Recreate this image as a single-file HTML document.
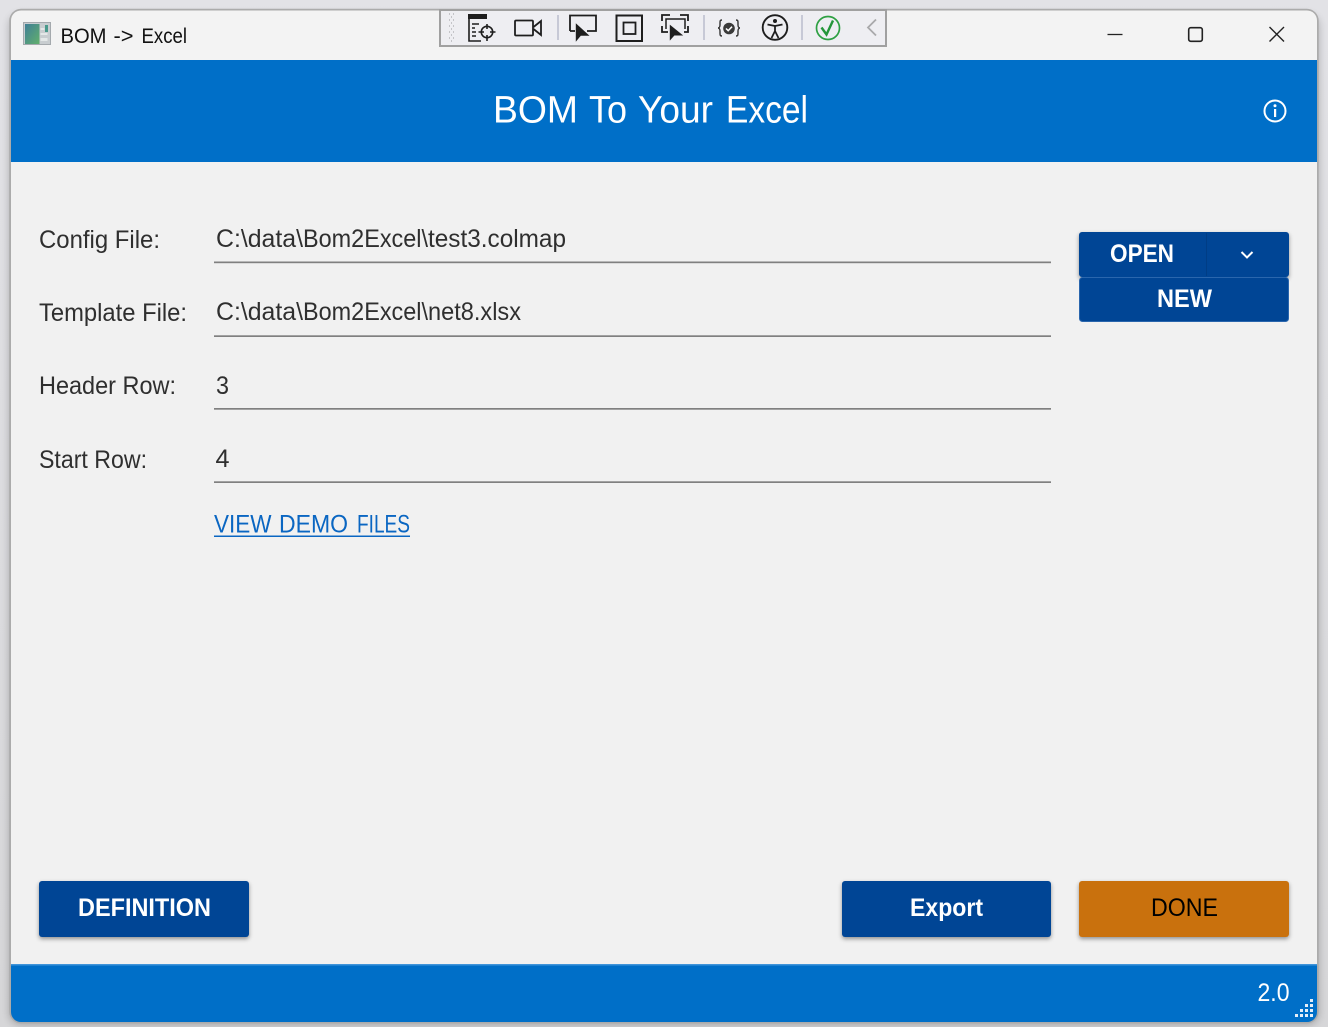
<!DOCTYPE html>
<html lang="en">
<head>
<meta charset="utf-8">
<title>BOM -> Excel</title>
<style>
html,body{margin:0;padding:0;width:1328px;height:1027px;overflow:hidden;background:#dcdce0}
svg{display:block}
text{font-family:"Liberation Sans",sans-serif}
</style>
</head>
<body>
<svg width="1328" height="1027" viewBox="0 0 1328 1027" xmlns="http://www.w3.org/2000/svg">
<defs>
<linearGradient id="bg" x1="0" y1="0" x2="0" y2="1"><stop offset="0" stop-color="#e2e2e6"/><stop offset="1" stop-color="#d6d6d8"/></linearGradient>
<linearGradient id="ic" x1="0" y1="0" x2="1" y2="1"><stop offset="0" stop-color="#3f7f96"/><stop offset="1" stop-color="#62b06c"/></linearGradient>
<filter id="sh" x="-10%" y="-20%" width="120%" height="150%"><feDropShadow dx="0" dy="2" stdDeviation="2.2" flood-color="#000" flood-opacity=".4"/></filter>
<filter id="ws" x="-3%" y="-3%" width="106%" height="106%"><feGaussianBlur stdDeviation="4"/></filter>
<clipPath id="win"><rect x="11" y="10.500" width="1306" height="1011.500" rx="10"/></clipPath>
</defs>
<rect width="1328" height="1027" fill="url(#bg)"/>
<rect x="9" y="14" width="1310" height="1011" rx="12" fill="#000" opacity=".22" filter="url(#ws)"/>
<rect x="9.200" y="8.700" width="1309.500" height="1014.800" rx="12" fill="#ababab"/>
<g clip-path="url(#win)">
<rect x="11" y="10" width="1306" height="50" fill="#f3f3f3"/>
<rect x="11" y="60" width="1306" height="102" fill="#006fc8"/>
<rect x="11" y="162" width="1306" height="803" fill="#f1f1f1"/>
<rect x="11" y="965" width="1306" height="57" fill="#006fc8"/>
<rect x="11" y="964" width="1306" height="1.500" fill="#3f94da"/>
</g>

<!-- title bar -->
<rect x="23.500" y="22.500" width="27" height="22" fill="#c8cdd0" stroke="#a4a9ad"/>
<rect x="25" y="24" width="14.500" height="20" fill="url(#ic)"/>
<rect x="45" y="25" width="3" height="7" fill="#4a9a8c"/>
<rect x="40.500" y="28" width="4" height="2" fill="#e4e8e8"/><rect x="40.500" y="33" width="7" height="2" fill="#e4e8e8"/><rect x="40.500" y="38" width="7" height="3" fill="#e4e8e8"/>
<g font-size="21" fill="#111">
<text x="60.500" y="43" textLength="46" lengthAdjust="spacingAndGlyphs">BOM</text>
<text x="113.500" y="43" textLength="20" lengthAdjust="spacingAndGlyphs">-&gt;</text>
<text x="141.500" y="43" textLength="45.500" lengthAdjust="spacingAndGlyphs">Excel</text>
</g>

<!-- window controls -->
<path d="M1107.500 34.500h15" stroke="#222" stroke-width="1.300" fill="none"/>
<rect x="1188.700" y="27.700" width="13.600" height="13.600" rx="2" fill="none" stroke="#222" stroke-width="1.600"/>
<path d="M1269.500 27l14.500 14.500M1284 27l-14.500 14.500" stroke="#222" stroke-width="1.400" fill="none"/>

<!-- debug toolbar -->
<rect x="440" y="10" width="446" height="36" fill="#eeeef2" stroke="#a0a0a0" stroke-width="2"/>
<path d="M449 14h1M453 14h1M451 17h1M449 20h1M453 20h1M451 23h1M449 26h1M453 26h1M451 29h1M449 32h1M453 32h1M451 35h1M449 38h1M453 38h1M451 41h1" stroke="#c4c4c8" stroke-width="2" fill="none"/>
<!-- icon 1 -->
<rect x="468" y="14" width="19" height="5" fill="#1e1e1e"/>
<path d="M469 19v22h12M472 24h7M472 28h3M472 32h4M472 36h4" stroke="#1e1e1e" stroke-width="1.600" fill="none"/>
<circle cx="487" cy="32" r="5.700" fill="#eeeef2" stroke="#1e1e1e" stroke-width="1.600"/>
<path d="M487 24v5M487 35v6M478.500 32h5.500M490 32h5.500" stroke="#1e1e1e" stroke-width="1.600" fill="none"/>
<!-- camera -->
<rect x="515" y="20.500" width="18" height="15" rx="1" fill="none" stroke="#1e1e1e" stroke-width="1.800"/>
<path d="M533.500 27l7.500-6v14l-7.500-6" fill="none" stroke="#1e1e1e" stroke-width="1.800"/>
<path d="M558 15v25M704 15v25M802 15v25" stroke="#c7c9d6" stroke-width="2" fill="none"/>
<!-- select element -->
<path d="M570 31V15.500h26V31h-9M570 31h5" fill="none" stroke="#1e1e1e" stroke-width="1.800"/>
<path d="M575.800 23.300V41.700L580.800 35.800H589.500Z" fill="#1e1e1e"/>
<!-- layout box -->
<rect x="616.500" y="15.500" width="25.500" height="25.500" fill="none" stroke="#1e1e1e" stroke-width="2"/>
<rect x="623.500" y="22.500" width="12" height="11.500" fill="none" stroke="#1e1e1e" stroke-width="1.800"/>
<!-- screen capture icon -->
<path d="M662 21v-6h8M680 15h8v6M662 26v6h6M688 26v6h-4" fill="none" stroke="#1e1e1e" stroke-width="1.800"/>
<path d="M666 29v-10h19v10" fill="none" stroke="#1e1e1e" stroke-width="1.500"/>
<path d="M669.500 24V41.500L674.500 35.800H684Z" fill="#1e1e1e" stroke="#eeeef2" stroke-width=".6"/>
<!-- braces check -->
<path d="M722 20c-2 0-2 1-2 3v2c0 2-1 3-2 3 1 0 2 1 2 3v2c0 2 0 3 2 3M736 20c2 0 2 1 2 3v2c0 2 1 3 2 3-1 0-2 1-2 3v2c0 2 0 3-2 3" fill="none" stroke="#333" stroke-width="1.400"/>
<circle cx="729" cy="28.500" r="5.800" fill="#3a3a3a"/>
<path d="M726 28.500l2.200 2.200 3.800-4" stroke="#fff" stroke-width="1.500" fill="none"/>
<!-- accessibility -->
<circle cx="775" cy="27.500" r="12.300" fill="none" stroke="#1e1e1e" stroke-width="1.900"/>
<circle cx="775" cy="21" r="2" fill="#1e1e1e"/>
<path d="M767.500 24.500l7.500 1.500 7.500-1.500M775 26v5M775 31l-3.500 7M775 31l3.500 7" fill="none" stroke="#1e1e1e" stroke-width="1.800"/>
<!-- green check -->
<circle cx="828" cy="28" r="11.500" fill="none" stroke="#2ea043" stroke-width="1.700"/>
<path d="M821.500 27.500l5 7 6.500-14" fill="none" stroke="#24963a" stroke-width="2.400"/>
<!-- chevron -->
<path d="M876 19.500l-8 8 8 8" fill="none" stroke="#a9a9ab" stroke-width="1.800"/>

<!-- header -->
<g font-size="38" fill="#fff">
<text x="493" y="122.500" textLength="85" lengthAdjust="spacingAndGlyphs">BOM</text>
<text x="589" y="122.500" textLength="38" lengthAdjust="spacingAndGlyphs">To</text>
<text x="638" y="122.500" textLength="75" lengthAdjust="spacingAndGlyphs">Your</text>
<text x="726" y="122.500" textLength="82" lengthAdjust="spacingAndGlyphs">Excel</text>
</g>
<circle cx="1275" cy="111" r="10.500" fill="none" stroke="#fff" stroke-width="2"/>
<circle cx="1275" cy="105.800" r="1.500" fill="#fff"/>
<rect x="1274" y="109" width="2.200" height="8" fill="#fff"/>

<!-- form -->
<g font-size="25" fill="#2f2f2f">
<text x="39" y="248" textLength="121" lengthAdjust="spacingAndGlyphs">Config File:</text>
<text x="39" y="321" textLength="148" lengthAdjust="spacingAndGlyphs">Template File:</text>
<text x="39" y="394" textLength="137" lengthAdjust="spacingAndGlyphs">Header Row:</text>
<text x="39" y="468" textLength="108" lengthAdjust="spacingAndGlyphs">Start Row:</text>
<text x="216" y="247" textLength="87" lengthAdjust="spacingAndGlyphs">C:\data\</text>
<text x="303" y="247" textLength="125" lengthAdjust="spacingAndGlyphs">Bom2Excel\</text>
<text x="428" y="247" textLength="138" lengthAdjust="spacingAndGlyphs">test3.colmap</text>
<text x="216" y="320" textLength="87" lengthAdjust="spacingAndGlyphs">C:\data\</text>
<text x="303" y="320" textLength="125" lengthAdjust="spacingAndGlyphs">Bom2Excel\</text>
<text x="428" y="320" textLength="93" lengthAdjust="spacingAndGlyphs">net8.xlsx</text>
<text x="216" y="394" textLength="13" lengthAdjust="spacingAndGlyphs">3</text>
<text x="215.500" y="467" textLength="14" lengthAdjust="spacingAndGlyphs">4</text>
</g>
<g fill="#808080">
<rect x="214" y="261.500" width="837" height="1.700"/>
<rect x="214" y="335.300" width="837" height="1.700"/>
<rect x="214" y="408" width="837" height="1.700"/>
<rect x="214" y="481.300" width="837" height="1.700"/>
</g>
<g font-size="25" fill="#0a66c2">
<text x="214" y="532.500" textLength="57.500" lengthAdjust="spacingAndGlyphs">VIEW</text>
<text x="279" y="532.500" textLength="69" lengthAdjust="spacingAndGlyphs">DEMO</text>
<text x="357" y="532.500" textLength="53" lengthAdjust="spacingAndGlyphs">FILES</text>
</g>
<rect x="214" y="535.500" width="196" height="1.500" fill="#0a66c2"/>

<!-- open / new -->
<rect x="1079" y="232" width="210" height="45" rx="3" fill="#004595" filter="url(#sh)"/>
<rect x="1206" y="233" width="1" height="43" fill="#003d85"/>
<rect x="1079.500" y="277.500" width="209" height="44" rx="3" fill="#004595" stroke="#2a66ad"/>
<text x="1110" y="262" font-size="25" font-weight="700" fill="#fff" textLength="64" lengthAdjust="spacingAndGlyphs">OPEN</text>
<path d="M1241.500 252l5.500 5.500 5.500-5.500" fill="none" stroke="#fff" stroke-width="2"/>
<text x="1157" y="307" font-size="25" font-weight="700" fill="#fff" textLength="55" lengthAdjust="spacingAndGlyphs">NEW</text>

<!-- bottom buttons -->
<rect x="39" y="881" width="210" height="56" rx="3" fill="#004595" filter="url(#sh)"/>
<text x="78" y="916" font-size="25" font-weight="700" fill="#fff" textLength="133" lengthAdjust="spacingAndGlyphs">DEFINITION</text>
<rect x="842" y="881" width="209" height="56" rx="3" fill="#004595" filter="url(#sh)"/>
<text x="910" y="916" font-size="25" font-weight="700" fill="#fff" textLength="73" lengthAdjust="spacingAndGlyphs">Export</text>
<rect x="1079" y="881" width="210" height="56" rx="3" fill="#c9710c" filter="url(#sh)"/>
<text x="1151" y="916" font-size="25" fill="#000" textLength="67" lengthAdjust="spacingAndGlyphs">DONE</text>

<!-- footer -->
<text x="1257.500" y="1001" font-size="25" fill="#fff" textLength="32" lengthAdjust="spacingAndGlyphs">2.0</text>
<g fill="#e4eef8">
<rect x="1310" y="999" width="3" height="3"/>
<rect x="1305" y="1004" width="3" height="3"/><rect x="1310" y="1004" width="3" height="3"/>
<rect x="1300" y="1009" width="3" height="3"/><rect x="1305" y="1009" width="3" height="3"/><rect x="1310" y="1009" width="3" height="3"/>
<rect x="1295" y="1014" width="3" height="3"/><rect x="1300" y="1014" width="3" height="3"/><rect x="1305" y="1014" width="3" height="3"/><rect x="1310" y="1014" width="3" height="3"/>
</g>
</svg>
</body>
</html>
